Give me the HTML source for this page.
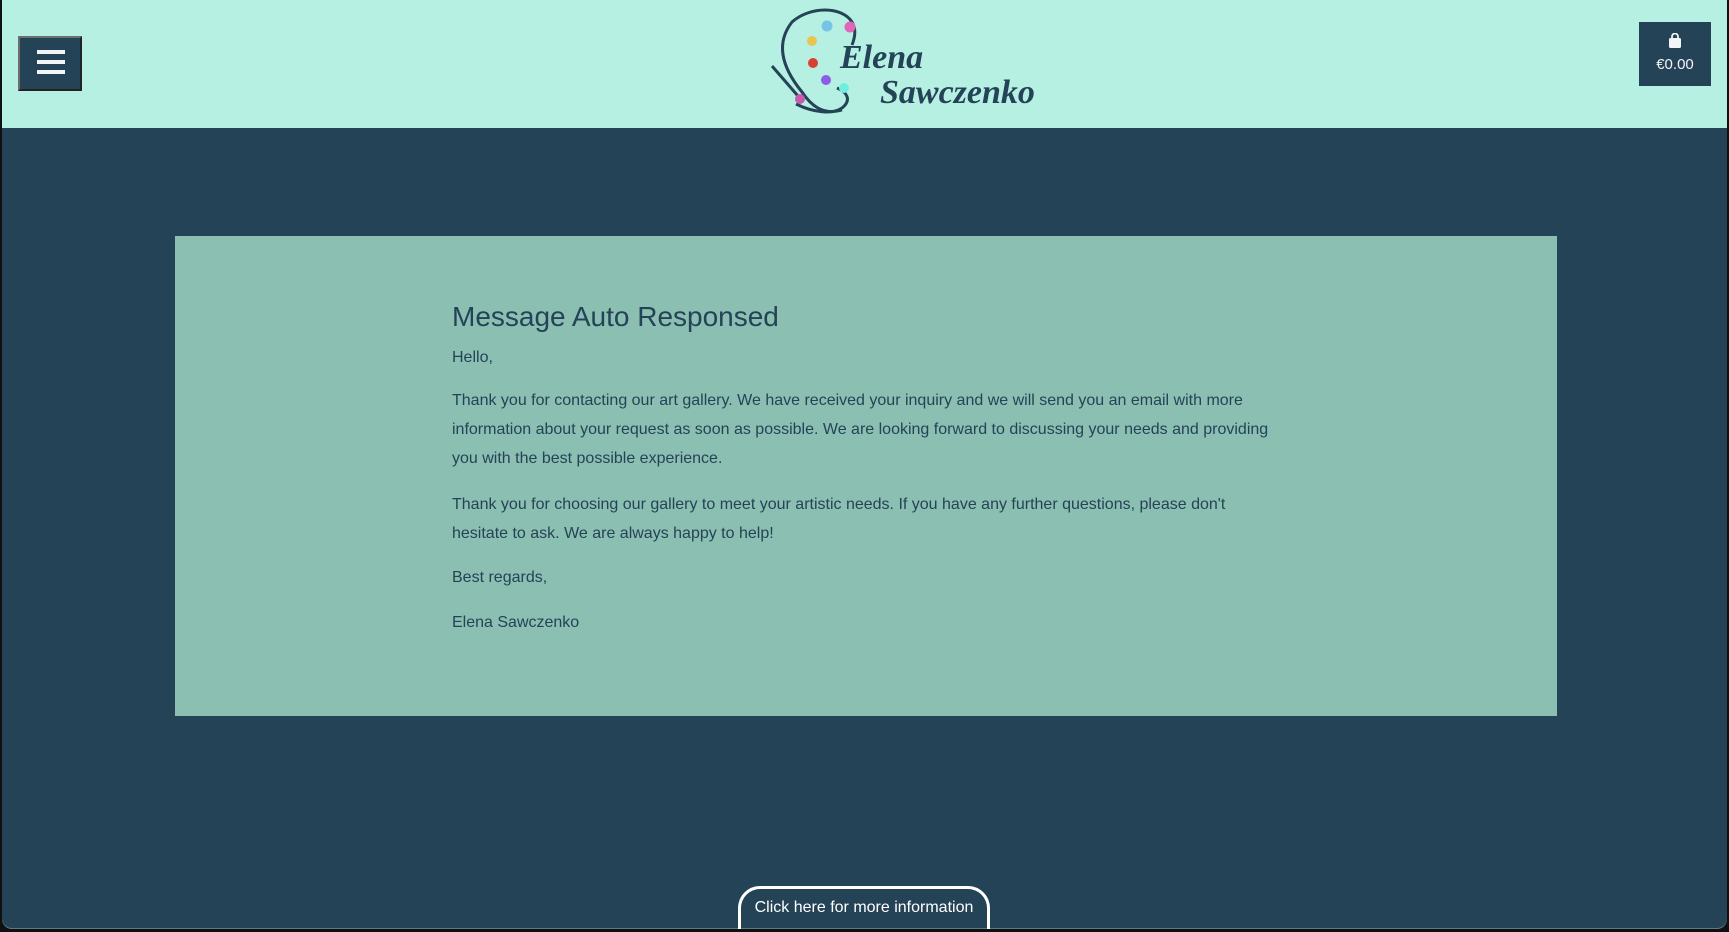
<!DOCTYPE html>
<html><head><meta charset="utf-8">
<style>
html,body{margin:0;padding:0}
body{width:1729px;height:932px;overflow:hidden;background:#101010;position:relative;font-family:"Liberation Sans",sans-serif}
#frame{position:absolute;left:2px;top:0;width:1725px;height:929px;background:#254356;border-radius:0 0 10px 10px;overflow:hidden;box-shadow:inset 0 -1px 0 #5d7a8a}
#hdr{position:absolute;left:0;top:0;width:1725px;height:128px;background:#b6f0e3}
#burger{position:absolute;left:16px;top:36px;width:64px;height:55px;background:#254356;border:2px solid;border-color:#6e6e6e #222 #222 #6e6e6e;box-sizing:border-box}
#burger i{position:absolute;left:17px;width:28px;height:4px;background:#f2f4f5}
#cart{position:absolute;left:1637px;top:22px;width:72px;height:64px;background:#254356;color:#f2f4f5;text-align:center;font-size:15px}
#box{position:absolute;left:173px;top:236px;width:1382px;height:480px;background:#8bbfb2;color:#254356}
.t{position:absolute;left:277px;font-size:16px;white-space:nowrap;letter-spacing:0}
#btn{position:absolute;left:736px;top:886px;width:252px;height:50px;border:3px solid #fff;border-bottom:none;border-radius:22px 22px 0 0;box-sizing:border-box;color:#fff;font-size:16px;text-align:center;line-height:38px}
</style></head><body>
<div id="frame">
<div id="hdr">
 <div id="burger"><i style="top:12px"></i><i style="top:22px"></i><i style="top:32px"></i></div>
 <svg style="position:absolute;left:760px;top:0" width="300" height="128" viewBox="0 0 300 128">
  <path d="M80 110 C60 116 48 104 40 92 C22 70 12 45 30 22 C48 6 80 6 90 22 C95 30 92 40 90 45" fill="none" stroke="#254356" stroke-width="3"/>
  <path d="M75 88 C85 92 90 100 80 108 C70 115 50 112 34 104" fill="none" stroke="#254356" stroke-width="3"/>
  <line x1="10" y1="66" x2="36" y2="96" stroke="#254356" stroke-width="3"/>
  <circle cx="38" cy="99" r="5" fill="#c85ab0"/>
  <circle cx="65" cy="26" r="5.5" fill="#78c4e6"/>
  <circle cx="88" cy="27" r="5.5" fill="#e066b8"/>
  <circle cx="50" cy="41" r="5" fill="#e8c450"/>
  <circle cx="51" cy="63" r="5" fill="#d84030"/>
  <circle cx="64" cy="80" r="5" fill="#8a5ce8"/>
  <circle cx="82" cy="88" r="5" fill="#70eedd"/>
  <text x="78" y="68" font-family="Liberation Serif,serif" font-style="italic" font-weight="bold" font-size="34" fill="#254356">Elena</text>
  <text x="118" y="103" font-family="Liberation Serif,serif" font-style="italic" font-weight="bold" font-size="34" fill="#254356">Sawczenko</text>
 </svg>
 <div id="cart">
  <svg style="position:absolute;left:29px;top:11px" width="14" height="15" viewBox="0 0 14 15"><path d="M4 5 V3.5 a3 3 0 0 1 6 0 V5" fill="none" stroke="#f2f4f5" stroke-width="1.8"/><rect x="1" y="5" width="12" height="10" rx="1.5" fill="#f2f4f5"/></svg>
  <div style="position:absolute;left:0;right:0;top:34px">€0.00</div>
 </div>
</div>
<div id="box">
 <div class="t" style="top:65px;font-size:28px">Message Auto Responsed</div>
 <div class="t" style="top:113px">Hello,</div>
 <div class="t" style="top:156px">Thank you for contacting our art gallery. We have received your inquiry and we will send you an email with more</div>
 <div class="t" style="top:185px">information about your request as soon as possible. We are looking forward to discussing your needs and providing</div>
 <div class="t" style="top:214px">you with the best possible experience.</div>
 <div class="t" style="top:260px">Thank you for choosing our gallery to meet your artistic needs. If you have any further questions, please don't</div>
 <div class="t" style="top:289px">hesitate to ask. We are always happy to help!</div>
 <div class="t" style="top:333px">Best regards,</div>
 <div class="t" style="top:378px">Elena Sawczenko</div>
</div>
<div id="btn">Click here for more information</div>
</div>
</body></html>
